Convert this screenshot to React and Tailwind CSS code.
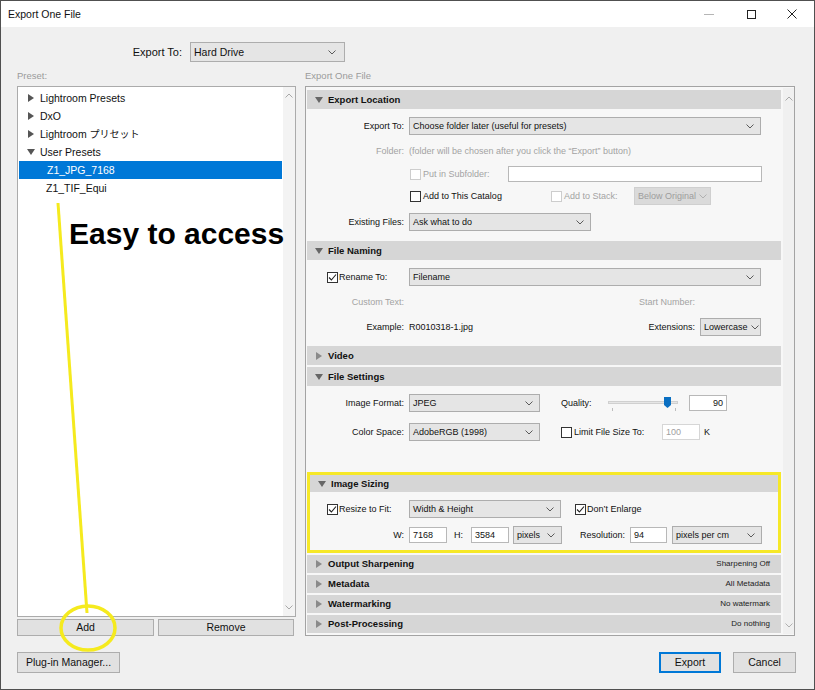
import React from "react";

function Chev({ color = "#5a5a5a" }) {
  return (
    <svg width="8" height="5" viewBox="0 0 8 5" className="shrink-0">
      <polyline points="0.5,0.5 4,4 7.5,0.5" fill="none" stroke={color} strokeWidth="1" />
    </svg>
  );
}

function ChevUp({ color = "#a8a8a8" }) {
  return (
    <svg width="8" height="5" viewBox="0 0 8 5">
      <polyline points="0.5,4.5 4,1 7.5,4.5" fill="none" stroke={color} strokeWidth="1" />
    </svg>
  );
}

function Select({ w, children, disabled }) {
  return (
    <div
      className={`${w} h-[18px] shrink-0 flex items-center justify-between pl-[3px] pr-[6px] gap-[3px] border ${
        disabled ? "border-[#cfcfcf] bg-[#dadada] text-[#9d9d9d]" : "border-[#adadad] bg-[#e5e5e5] text-[#111]"
      }`}
    >
      <span className="whitespace-nowrap">{children}</span>
      <Chev color={disabled ? "#b0b0b0" : "#5a5a5a"} />
    </div>
  );
}

function Input({ w, children, disabled, right }) {
  return (
    <div
      className={`${w} h-[16px] shrink-0 flex items-center px-[3px] bg-white border ${
        disabled ? "border-[#d6d6d6] text-[#a0a0a0]" : "border-[#b8b8b8] text-[#111]"
      } ${right ? "justify-end" : ""}`}
    >
      {children}
    </div>
  );
}

function Check({ checked, disabled }) {
  return (
    <span
      className={`w-[11px] h-[11px] shrink-0 flex items-center justify-center bg-white border ${
        disabled ? "border-[#cdcdcd]" : "border-[#333]"
      }`}
    >
      {checked && (
        <svg width="9" height="9" viewBox="0 0 9 9">
          <polyline points="1,4.5 3.4,7 8,1.5" fill="none" stroke="#222" strokeWidth="1.1" />
        </svg>
      )}
    </span>
  );
}

function Tri({ open, color = "#666" }) {
  return open ? (
    <svg width="8" height="6" viewBox="0 0 8 6" className="shrink-0">
      <polygon points="0,0 8,0 4,6" fill={color} />
    </svg>
  ) : (
    <svg width="8" height="8" viewBox="0 0 8 8" className="shrink-0">
      <polygon points="1,0 7,4 1,8" fill={color} />
    </svg>
  );
}

function Header({ open, title, right, h = "h-[19px]" }) {
  return (
    <div className={`${h} shrink-0 bg-[#d6d6d6] flex items-center pl-[8px] pr-[11px] gap-[5px]`}>
      <Tri open={open} color={open ? "#666" : "#8a8a8a"} />
      <span className="font-bold text-[9.5px] text-[#111]">{title}</span>
      {right && <span className="ml-auto text-[8px] text-[#222]">{right}</span>}
    </div>
  );
}

function Label({ children, gray, w = "w-[102px]" }) {
  return (
    <span className={`${w} shrink-0 text-right pr-[5px] ${gray ? "text-[#a3a3a3]" : "text-[#111]"}`}>{children}</span>
  );
}

function Row({ mt, children }) {
  return <div className={`${mt} h-[18px] flex items-center`}>{children}</div>;
}

function TreeRow({ open, leaf, selected, children }) {
  return (
    <div
      className={`h-[18px] flex items-center text-[10.5px] ${
        selected ? "bg-[#0078d7] text-white mx-px" : "text-[#111]"
      } ${leaf ? "pl-[28px]" : "pl-[9px]"}`}
    >
      {!leaf && (
        <span className="w-[13px] flex items-center">
          <Tri open={open} color="#555" />
        </span>
      )}
      <span>{children}</span>
    </div>
  );
}

function Button({ w, children, primary }) {
  return (
    <div
      className={`${w} h-full shrink-0 flex items-center justify-center bg-[#e1e1e1] text-[10.5px] text-[#111] ${
        primary ? "border-2 border-[#0078d7]" : "border border-[#adadad]"
      }`}
    >
      {children}
    </div>
  );
}

export default function App() {
  return (
    <div className="relative w-[815px] h-[690px] overflow-hidden bg-[#f0f0f0] border border-[#505050] font-['Liberation_Sans',Arial,sans-serif] text-[9px] leading-none">
      {/* title bar */}
      <div className="h-[26px] bg-white flex items-center pl-[7px]">
        <span className="text-[10.5px] text-[#111]">Export One File</span>
        <div className="ml-auto flex items-center h-full">
          <div className="w-[46px] flex justify-center">
            <div className="w-[10px] h-px bg-[#b5b5b5]" />
          </div>
          <div className="w-[38px] flex justify-center">
            <div className="w-[9px] h-[9px] border border-[#222]" />
          </div>
          <div className="w-[44px] flex justify-center">
            <svg width="10" height="10" viewBox="0 0 10 10">
              <path d="M0.5 0.5 L9.5 9.5 M9.5 0.5 L0.5 9.5" stroke="#222" strokeWidth="1" />
            </svg>
          </div>
        </div>
      </div>

      <div className="pl-[16px] pr-[18px]">
        {/* export to */}
        <div className="mt-[15px] h-[20px] flex items-center">
          <span className="w-[165px] text-right text-[11px] text-[#111]">Export To:</span>
          <div className="ml-[8px] w-[155px] h-[20px] flex items-center justify-between pl-[3px] pr-[8px] border border-[#adadad] bg-[#e5e5e5] text-[10.5px] text-[#111]">
            <span>Hard Drive</span>
            <Chev />
          </div>
        </div>

        <div className="mt-[9px] flex">
          {/* presets column */}
          <div className="w-[279px] shrink-0">
            <div className="h-[15px] text-[9.5px] text-[#9b9b9b]">Preset:</div>
            <div className="h-[531px] bg-white border border-[#ababab] flex">
              <div className="flex-1 pt-[2px]">
                <TreeRow>Lightroom Presets</TreeRow>
                <TreeRow>DxO</TreeRow>
                <TreeRow>
                  Lightroom <span className="font-['Noto_Sans_CJK_JP',sans-serif] text-[10px]">プリセット</span>
                </TreeRow>
                <TreeRow open>User Presets</TreeRow>
                <TreeRow leaf selected>Z1_JPG_7168</TreeRow>
                <TreeRow leaf>Z1_TIF_Equi</TreeRow>
              </div>
              <div className="w-[12px] bg-[#f3f3f3] flex flex-col items-center justify-between pt-[6px] pb-[6px]">
                <ChevUp />
                <Chev color="#a8a8a8" />
              </div>
            </div>
            <div className="mt-[2px] h-[17px] flex gap-[4px]">
              <Button w="w-[137px]">Add</Button>
              <Button w="w-[136px]">Remove</Button>
            </div>
          </div>

          {/* settings column */}
          <div className="ml-[9px] w-[490px] shrink-0">
            <div className="h-[15px] text-[9.5px] text-[#9b9b9b]">Export One File</div>
            <div className="h-[550px] border border-[#a3a3a3] bg-[#f7f7f7] flex p-px overflow-hidden">
              <div className="w-[474px] shrink-0 flex flex-col pt-[2px]">
                {/* Export Location */}
                <Header open title="Export Location" />
                <div className="pb-[10px]">
                  <Row mt="mt-[8px]">
                    <Label>Export To:</Label>
                    <Select w="w-[352px]">Choose folder later (useful for presets)</Select>
                  </Row>
                  <Row mt="mt-[7px]">
                    <Label gray>Folder:</Label>
                    <span className="text-[#a3a3a3]">(folder will be chosen after you click the “Export” button)</span>
                  </Row>
                  <Row mt="mt-[5px]">
                    <span className="w-[102px] shrink-0" />
                    <span className="w-[99px] shrink-0 flex items-center gap-[2px] pl-px">
                      <Check disabled />
                      <span className="text-[#a3a3a3]">Put in Subfolder:</span>
                    </span>
                    <Input w="w-[254px]" />
                  </Row>
                  <Row mt="mt-[4px]">
                    <span className="w-[102px] shrink-0" />
                    <span className="w-[142px] shrink-0 flex items-center gap-[2px] pl-px">
                      <Check />
                      <span className="text-[#111]">Add to This Catalog</span>
                    </span>
                    <span className="w-[83px] shrink-0 flex items-center gap-[2px]">
                      <Check disabled />
                      <span className="text-[#a3a3a3]">Add to Stack:</span>
                    </span>
                    <Select w="w-[77px]" disabled>Below Original</Select>
                  </Row>
                  <Row mt="mt-[8px]">
                    <Label>Existing Files:</Label>
                    <Select w="w-[182px]">Ask what to do</Select>
                  </Row>
                </div>

                {/* File Naming */}
                <Header open title="File Naming" />
                <div className="pb-[10px]">
                  <Row mt="mt-[8px]">
                    <span className="w-[102px] shrink-0 flex items-center gap-px pl-[20px]">
                      <Check checked />
                      <span className="text-[#111]">Rename To:</span>
                    </span>
                    <Select w="w-[352px]">Filename</Select>
                  </Row>
                  <Row mt="mt-[7px]">
                    <Label gray>Custom Text:</Label>
                    <span className="w-[286px] shrink-0 text-right text-[#a3a3a3]">Start Number:</span>
                  </Row>
                  <Row mt="mt-[7px]">
                    <Label>Example:</Label>
                    <span className="w-[286px] shrink-0 flex justify-between text-[#111]">
                      <span>R0010318-1.jpg</span>
                      <span>Extensions:</span>
                    </span>
                    <span className="ml-[5px]">
                      <Select w="w-[61px]">Lowercase</Select>
                    </span>
                  </Row>
                </div>

                <Header title="Video" />
                <div className="mt-[2px]">
                  <Header open title="File Settings" />
                </div>
                <div className="pb-[31px]">
                  <Row mt="mt-[8px]">
                    <Label>Image Format:</Label>
                    <Select w="w-[131px]">JPEG</Select>
                    <span className="ml-[21px] w-[47px] shrink-0 text-[#111]">Quality:</span>
                    <svg width="70" height="18" viewBox="0 0 70 18" className="shrink-0">
                      <rect x="0.5" y="7.5" width="69" height="2" fill="#e6e6e6" stroke="#d0d0d0" />
                      <line x1="4.5" y1="14" x2="4.5" y2="17" stroke="#bdbdbd" />
                      <line x1="67.5" y1="14" x2="67.5" y2="17" stroke="#bdbdbd" />
                      <path d="M56 3 H63 V11 L59.5 14 L56 11 Z" fill="#0a6fc2" />
                    </svg>
                    <span className="ml-[11px]">
                      <Input w="w-[38px]" right>90</Input>
                    </span>
                  </Row>
                  <Row mt="mt-[11px]">
                    <Label>Color Space:</Label>
                    <Select w="w-[131px]">AdobeRGB (1998)</Select>
                    <span className="ml-[21px] w-[101px] shrink-0 flex items-center gap-[2px]">
                      <Check />
                      <span className="text-[#111]">Limit File Size To:</span>
                    </span>
                    <Input w="w-[38px]" disabled>100</Input>
                    <span className="ml-[4px] text-[#111]">K</span>
                  </Row>
                </div>

                {/* Image Sizing, highlighted */}
                <div className="border-[3px] border-[#f6e827] pb-[6px]">
                  <Header open title="Image Sizing" h="h-[17px]" />
                  <Row mt="mt-[8px]">
                    <span className="w-[99px] shrink-0 flex items-center gap-px pl-[17px]">
                      <Check checked />
                      <span className="text-[#111]">Resize to Fit:</span>
                    </span>
                    <Select w="w-[152px]">Width &amp; Height</Select>
                    <span className="ml-[14px] flex items-center gap-px">
                      <Check checked />
                      <span className="text-[#111]">Don’t Enlarge</span>
                    </span>
                  </Row>
                  <Row mt="mt-[8px]">
                    <Label w="w-[99px]">W:</Label>
                    <Input w="w-[38px]">7168</Input>
                    <span className="ml-[7px] w-[17px] shrink-0 text-[#111]">H:</span>
                    <Input w="w-[38px]">3584</Input>
                    <span className="ml-[4px]">
                      <Select w="w-[49px]">pixels</Select>
                    </span>
                    <Label w="w-[68px]">Resolution:</Label>
                    <Input w="w-[37px]">94</Input>
                    <span className="ml-[5px]">
                      <Select w="w-[90px]">pixels per cm</Select>
                    </span>
                  </Row>
                </div>

                <div className="mt-[2px] flex flex-col gap-[2px]">
                  <Header title="Output Sharpening" right="Sharpening Off" h="h-[18px]" />
                  <Header title="Metadata" right="All Metadata" h="h-[18px]" />
                  <Header title="Watermarking" right="No watermark" h="h-[18px]" />
                  <Header title="Post-Processing" right="Do nothing" h="h-[18px]" />
                </div>
              </div>
              <div className="ml-[2px] w-[11px] shrink-0 bg-[#f0f0f0] flex flex-col items-center justify-between pt-[8px] pb-[6px]">
                <ChevUp />
                <Chev color="#b0b0b0" />
              </div>
            </div>
          </div>
        </div>

        {/* bottom buttons */}
        <div className="mt-[16px] h-[21px] flex">
          <Button w="w-[103px]">Plug-in Manager...</Button>
          <div className="ml-auto flex gap-[12px] h-full">
            <Button w="w-[62px]" primary>Export</Button>
            <Button w="w-[63px]">Cancel</Button>
          </div>
        </div>
      </div>

      {/* annotation overlay */}
      <svg className="absolute inset-0 pointer-events-none" width="815" height="690" viewBox="0 0 815 690">
        <line x1="57" y1="202" x2="86" y2="612" stroke="#f5ea1e" strokeWidth="3" />
        <ellipse cx="87" cy="627" rx="27" ry="22" fill="none" stroke="#f5ea1e" strokeWidth="3.5" />
      </svg>
      <div className="absolute left-[68px] top-[218px] text-[30px] leading-[30px] font-bold text-black whitespace-nowrap">
        Easy to access
      </div>
    </div>
  );
}
